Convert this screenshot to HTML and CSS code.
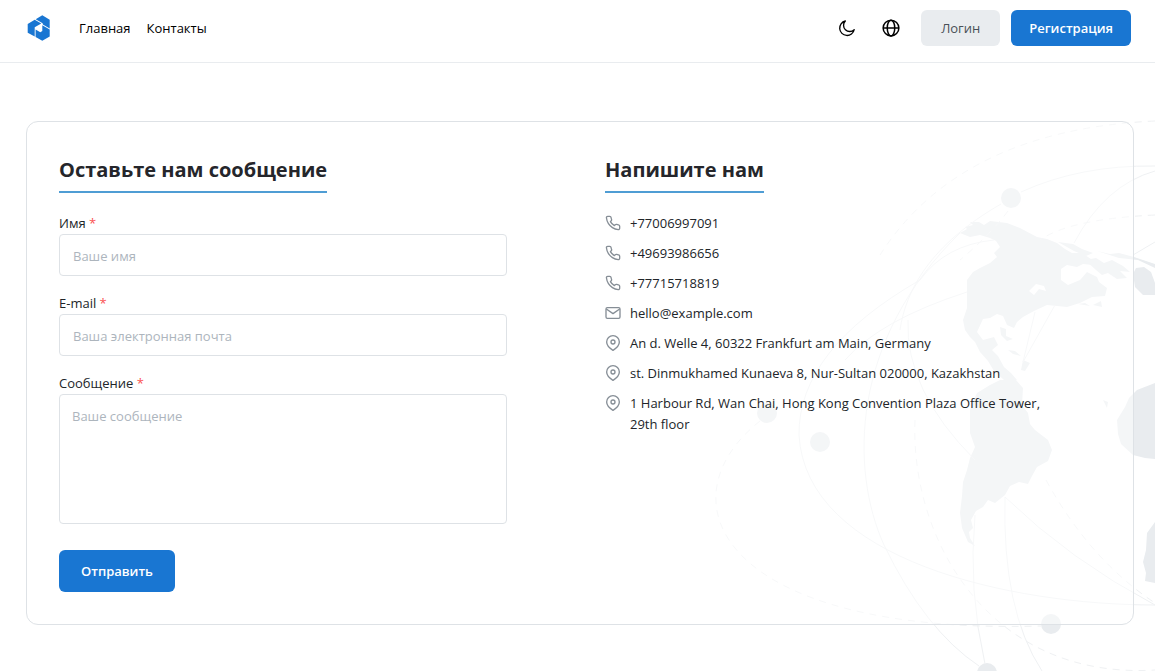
FILE: index.html
```html
<!DOCTYPE html>
<html lang="ru">
<head>
<meta charset="utf-8">
<meta name="viewport" content="width=device-width, initial-scale=1">
<title>Контакты</title>
<link rel="stylesheet" href="styles.css">
</head>
<body>
<svg class="sprite" aria-hidden="true">
  <symbol id="handset" viewBox="0 0 24 24"><path d="M22 16.92v3a2 2 0 0 1-2.18 2 19.8 19.8 0 0 1-8.63-3.07 19.5 19.5 0 0 1-6-6A19.8 19.8 0 0 1 2.12 4.18 2 2 0 0 1 4.11 2h3a2 2 0 0 1 2 1.72c.13.96.36 1.9.7 2.81a2 2 0 0 1-.45 2.11L8.09 9.91a16 16 0 0 0 6 6l1.27-1.27a2 2 0 0 1 2.11-.45c.91.34 1.85.57 2.81.7A2 2 0 0 1 22 16.92z"/></symbol>
  <symbol id="mail" viewBox="0 0 24 24"><rect x="1.5" y="4" width="21" height="16" rx="2"/><path d="m2 6 10 7 10-7"/></symbol>
  <symbol id="pin" viewBox="0 0 24 24"><path d="M21.5 10.500c0 6.500-9.500 12.500-9.500 12.500s-9.500-6-9.500-12.500a9.500 9.500 0 0 1 19 0z"/><circle cx="12" cy="10.500" r="3"/></symbol>
</svg>

<header class="header">
  <a class="logo" href="#" aria-label="На главную">
    <svg viewBox="0 0 24 26" aria-hidden="true">
      <path d="M.7 9 7.700 4.700 14.300 8.500 7.700 12.300V21.500L.7 17.800z"/>
      <path d="M8.700 4.200 15.300.3 22.700 4.700V13.500L15.900 9.500 15.600 8.300z"/>
      <path d="M22.700 14.600V21.500L15.300 25.700 8.600 21.900V14.500L13.300 17.200 15.300 16V10.300z"/>
    </svg>
  </a>
  <nav class="nav">
    <a href="#">Главная</a>
    <a href="#">Контакты</a>
  </nav>
  <div class="actions">
    <div class="icon-buttons">
      <button class="icon-button" type="button" aria-label="Тёмная тема">
        <svg class="moon" viewBox="0 0 24 24" aria-hidden="true"><path d="M9.500 1.500A11 11 0 1 0 22.800 14.500 9.200 9.200 0 0 1 9.500 1.500z"/></svg>
      </button>
      <button class="icon-button" type="button" aria-label="Язык">
        <svg viewBox="0 0 24 24" aria-hidden="true"><circle cx="12" cy="12" r="10.500"/><ellipse cx="12" cy="12" rx="5" ry="10.500"/><path d="M1.500 12h21"/></svg>
      </button>
    </div>
    <button class="button button-light" type="button">Логин</button>
    <button class="button button-primary" type="button">Регистрация</button>
  </div>
</header>

<main class="page">
  <svg class="world" viewBox="700 100 455 571" aria-hidden="true">
    <g class="land">
      <path d="M960 233 967 229 965 227 973 225 970 222 979 222 984 225 990 221 1007 223 1020 228 1037 237 1047 239 1057 243 1065 249 1072 253 1082 253 1091 259 1093 265 1083 264 1077 267 1067 265 1061 269 1061 280 1068 285 1080 280 1087 272 1097 277 1099 282 1107 288 1105 296 1092 297 1080 303 1067 307 1047 305 1034 311 1023 317 1017 322 1014 328 1007 325 1003 316 997 314 990 318 983 319 977 332 983 340 994 337 998 345 992 350 998 356 1004 367 1011 373 1017 380 1004 380 994 371 988 361 980 352 975 342 970 337 965 330 963 320 967 308 967 280 973 272 980 268 990 263 997 257 994 253 1000 247 996 241 990 238 980 235 970 237z"/>
      <path d="M1000 380 990 385 977 393 973 402 970 410 970 433 975 447 970 458 967 470 963 482 962 496 960 513 962 528 968 542 975 546 970 538 969 532 973 528 971 520 976 511 983 507 988 500 995 503 1005 495 1010 486 1019 482 1028 484 1032 476 1037 467 1048 461 1052 450 1048 440 1035 430 1030 424 1028 413 1022 405 1023 388 1016 380z"/>
      <path d="M1155 383 1137 390 1129 398 1125 407 1117 420 1118 434 1121 444 1133 455 1145 458 1155 459z"/>
      <path d="M1155 522 1147 533 1146 550 1143 562 1146 573 1145 581 1155 583z"/>
      <path d="M1133 274 1136 268 1144 267 1151 272 1155 283V295L1143 295 1135 287z"/>
      <path d="M1058 242 1073 244 1082 249 1093 253 1086 256 1074 251z M1085 260 1096 258 1104 263 1112 260 1123 266 1130 272 1120 271 1127 278 1117 279 1108 273 1102 275 1096 270z M1097 251 1110 254 1119 253 1134 257 1155 264V268L1138 260 1119 258z M1078 304 1085 303 1090 306z M1093 305 1101 301 1102 307z"/>
      <path d="M1000 327 1006 329 1006 336 1013 339 1007 341 1001 335z M1008 350 1015 351 1021 356 1013 354z M1023 360 1030 363 1025 371 1021 370z M1103 400 1108 402 1107 408z"/>
    </g>
    <path class="water" d="M1029 291 1036 284 1044 286 1046 291 1039 289 1034 295z"/>
    <g class="dots">
      <circle cx="1011" cy="198" r="10"/><circle cx="767" cy="413" r="10"/><circle cx="820" cy="442" r="10"/>
      <circle cx="1051" cy="624" r="10"/><circle cx="987" cy="673" r="10"/>
    </g>
    <g class="routes">
      <path d="M1021 192Q1080 165 1155 166M1001 204C930 245 906 290 900 330"/>
      <path d="M1155 171Q1105 185 1074 243M1155 242 1133 255"/>
      <path d="M994 240Q945 245 920 280 798 350 799 435C806 560 1010 605 1155 605"/>
      <path d="M960 233C850 340 850 470 884 545Q925 630 979 666"/>
      <path d="M967 292Q880 320 845 360M908 320Q905 390 975 460M1055 305 1023 362 1035 312"/>
      <path d="M975 515Q968 590 985 664M1005 497Q1002 610 1042 671M1005 497Q1070 560 1155 605"/>
    </g>
    <g class="routes dashed">
      <path d="M1155 121Q960 130 880 255M1155 215Q1070 219 1040 240M1008 211Q990 235 960 260"/>
      <path d="M760 421C660 500 720 635 1041 626M915 420C910 540 990 680 1155 670M1046 480Q1090 560 1155 603"/>
    </g>
  </svg>

  <section class="card">
    <form class="column">
      <h2 class="title">Оставьте нам сообщение</h2>
      <div class="field">
        <label for="name">Имя <span class="required">*</span></label>
        <input id="name" type="text" placeholder="Ваше имя">
      </div>
      <div class="field">
        <label for="email">E-mail <span class="required">*</span></label>
        <input id="email" type="email" placeholder="Ваша электронная почта">
      </div>
      <div class="field">
        <label for="message">Сообщение <span class="required">*</span></label>
        <textarea id="message" placeholder="Ваше сообщение"></textarea>
      </div>
      <button class="button button-primary submit" type="submit">Отправить</button>
    </form>

    <div class="column">
      <h2 class="title">Напишите нам</h2>
      <ul class="contacts">
        <li><svg aria-hidden="true"><use href="#handset"/></svg><span>+77006997091</span></li>
        <li><svg aria-hidden="true"><use href="#handset"/></svg><span>+49693986656</span></li>
        <li><svg aria-hidden="true"><use href="#handset"/></svg><span>+77715718819</span></li>
        <li><svg aria-hidden="true"><use href="#mail"/></svg><span>hello@example.com</span></li>
        <li><svg aria-hidden="true"><use href="#pin"/></svg><span>An d. Welle 4, 60322 Frankfurt am Main, Germany</span></li>
        <li><svg aria-hidden="true"><use href="#pin"/></svg><span>st. Dinmukhamed Kunaeva 8, Nur-Sultan 020000, Kazakhstan</span></li>
        <li><svg aria-hidden="true"><use href="#pin"/></svg><span>1 Harbour Rd, Wan Chai, Hong Kong Convention Plaza Office Tower, 29th floor</span></li>
      </ul>
    </div>
  </section>
</main>
</body>
</html>
```

FILE: styles.css
```css
* { box-sizing: border-box; }

body {
  margin: 0;
  min-height: 100vh;
  display: flex;
  flex-direction: column;
  background: #fff;
  color: #212529;
  font: 13px/20px "Open Sans", "Noto Sans", sans-serif;
}

button, input, textarea { font: inherit; }
.sprite { display: none; }

.header {
  display: flex;
  align-items: center;
  padding: 10px 24px 16px 27px;
  border-bottom: 1px solid #e9ecef;
}

.logo { display: flex; margin-right: 28px; }
.logo svg { width: 24px; height: 26px; fill: #1976d2; }

.nav { display: flex; gap: 16px; }
.nav a { color: #000; font-weight: 500; text-decoration: none; }

.actions { display: flex; align-items: center; gap: 11px; margin-left: auto; }
.icon-buttons { display: flex; gap: 6px; }
.icon-button {
  display: grid;
  place-items: center;
  width: 38px;
  height: 36px;
  padding: 0;
  border: 0;
  background: none;
}
.icon-button svg { width: 18px; height: 18px; fill: none; stroke: #000; stroke-width: 2; stroke-linejoin: round; }
.icon-button .moon { width: 16px; height: 16px; overflow: visible; }

.button {
  height: 36px;
  padding: 0 18px;
  border: 0;
  border-radius: 6px;
  font-weight: 600;
}
.button-light { padding: 0 20px; background: #e9ecef; color: #495057; font-weight: 500; }
.button-primary { background: #1976d2; color: #fff; }

.page {
  position: relative;
  flex: 1;
  padding: 58px 21px 46px 26px;
  overflow: hidden;
}

.world { position: absolute; top: 37px; right: 0; width: 455px; height: 571px; }
.land, .dots { fill: #e9ecef; }
.water { fill: #fff; }
.routes { fill: none; stroke: #eff1f3; stroke-width: 1; }
.dashed { stroke-dasharray: 7 6; }

.card {
  position: relative;
  display: grid;
  grid-template-columns: minmax(0, 448px) minmax(0, 448px);
  gap: 98px;
  padding: 32px;
  border: 1px solid #dee2e6;
  border-radius: 12px;
  background: rgba(255, 255, 255, 0.5);
}

.title {
  width: fit-content;
  margin: 0 0 20px;
  padding-bottom: 5px;
  border-bottom: 2px solid #4f9dd4;
  color: #25262b;
  font-size: 20px;
  line-height: 32px;
  font-weight: 700;
}

.field { display: flex; flex-direction: column; margin-bottom: 17px; }
.field label { padding-bottom: 1px; font-weight: 500; }
.required { color: #fa5252; font-weight: 400; }
.field input, .field textarea {
  width: 100%;
  height: 42px;
  padding: 2px 13px 0;
  border: 1px solid #dee2e6;
  border-radius: 4px;
  background: #fff;
}
.field textarea { height: 130px; padding: 11px 12px; resize: none; }
.field ::placeholder { color: #adb5bd; opacity: 1; }
.submit { height: 42px; margin-top: 9px; padding: 0 22px; }

.contacts { display: flex; flex-direction: column; gap: 9px; margin: 0; padding: 0; list-style: none; }
.contacts li { display: flex; gap: 9px; line-height: 21px; }
.contacts svg { flex: none; width: 16px; height: 16px; margin-top: 2px; fill: none; stroke: #868e96; stroke-width: 2; stroke-linejoin: round; }

@media (max-width: 800px) {
  .card { grid-template-columns: minmax(0, 1fr); gap: 32px; }
}
```
